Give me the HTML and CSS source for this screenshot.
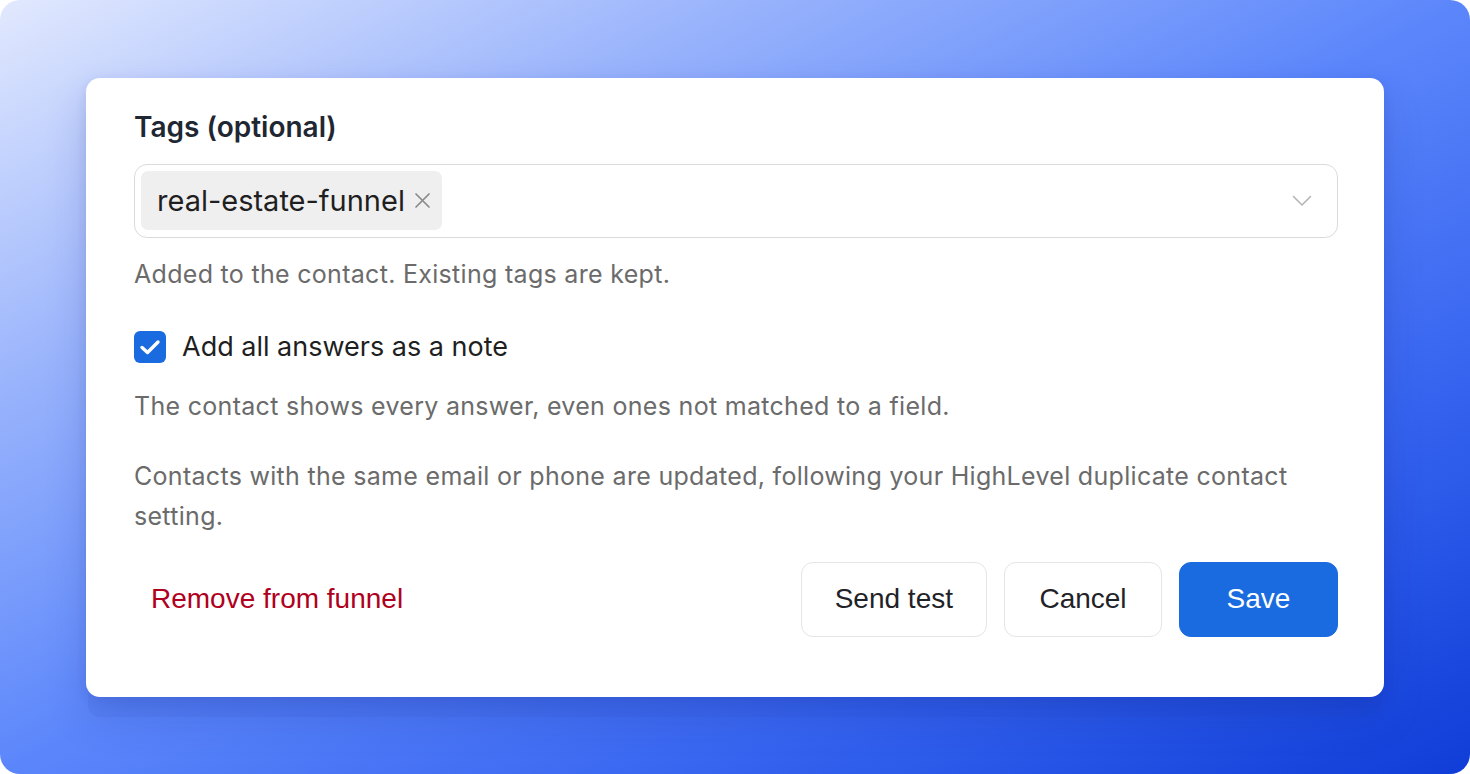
FILE: index.html
```html
<!DOCTYPE html>
<html lang="en">
<head>
<meta charset="utf-8">
<title>Tags</title>
<link rel="stylesheet" href="styles.css">
</head>
<body>
<div class="stage">
  <div class="card">
    <div class="label">Tags (optional)</div>
    <div class="select">
      <div class="chip">
        <span class="chip-text">real-estate-funnel</span>
        <svg class="chip-x" width="17" height="17" viewBox="0 0 17 17"><path d="M2 2 L15 15 M15 2 L2 15" stroke="#8a8a8a" stroke-width="1.7" fill="none" stroke-linecap="round"/></svg>
      </div>
      <svg class="chevron" width="20" height="12" viewBox="0 0 20 12"><path d="M1.5 1.5 L10 10 L18.5 1.5" stroke="#b5b5b5" stroke-width="1.6" fill="none" stroke-linecap="round" stroke-linejoin="round"/></svg>
    </div>
    <p class="help help-tags">Added to the contact. Existing tags are kept.</p>
    <label class="check-row">
      <span class="checkbox"><svg width="22" height="18" viewBox="0 0 22 18"><path d="M3 9.5 L8.5 14.5 L19 4" stroke="#fff" stroke-width="3.4" fill="none" stroke-linecap="round" stroke-linejoin="round"/></svg></span>
      <span class="check-text">Add all answers as a note</span>
    </label>
    <p class="help help-note">The contact shows every answer, even ones not matched to a field.</p>
    <p class="help para">Contacts with the same email or phone are updated, following your HighLevel duplicate contact setting.</p>
    <div class="footer">
      <button class="link-danger">Remove from funnel</button>
      <div class="actions">
        <button class="btn">Send test</button>
        <button class="btn">Cancel</button>
        <button class="btn btn-primary">Save</button>
      </div>
    </div>
  </div>
</div>
</body>
</html>
```
FILE: styles.css
```css
* { box-sizing: border-box; }
html, body { margin: 0; padding: 0; background: #ffffff; }
body { font-family: Inter, "Noto Sans", sans-serif; }
.stage {
  width: 1470px;
  height: 774px;
  border-radius: 20px;
  background: linear-gradient(to bottom right, #e2e9fe 0%, #9ab4fc 25%, #5b86fb 50%, #3563ef 75%, #0f3dd7 100%);
  display: flex;
  align-items: center;
  justify-content: center;
  overflow: hidden;
}
.card {
  width: 1298px;
  height: 619px;
  background: #fff;
  border-radius: 14px;
  padding: 34px 46px 0 48px;
  box-shadow: 0 22px 0 -2px rgba(30, 60, 170, 0.07), 0 20px 40px rgba(20, 40, 140, 0.18), 0 4px 12px rgba(20, 40, 140, 0.10);
}
.label {
  font-size: 28px;
  line-height: 30px;
  font-weight: 600;
  color: #1f2733;
}
.select {
  margin-top: 22px;
  height: 74px;
  border: 1.5px solid #dadada;
  border-radius: 13px;
  padding: 0 25px 0 6px;
  display: flex;
  align-items: center;
  justify-content: space-between;
}
.chip {
  height: 59px;
  background: #efefef;
  border-radius: 7px;
  padding: 0 11px 0 16px;
  display: flex;
  align-items: center;
  gap: 9px;
}
.chip-text {
  font-size: 29px;
  color: #1f1f1f;
}
.chip-x { display: block; }
.chevron { display: block; }
.help {
  margin: 0;
  font-size: 25px;
  letter-spacing: 0.3px;
  line-height: 30px;
  color: #6b6b6b;
}
.help-tags { margin-top: 21px; }
.check-row {
  margin-top: 42px;
  display: flex;
  align-items: center;
  gap: 16px;
  height: 32px;
}
.checkbox {
  width: 32px;
  height: 32px;
  border-radius: 6px;
  background: #1a6be0;
  display: flex;
  align-items: center;
  justify-content: center;
}
.checkbox svg { display: block; }
.check-text {
  font-size: 27px;
  color: #1f1f1f;
}
.help-note { margin-top: 28px; }
.para { margin-top: 35px; line-height: 40px; }
.footer {
  margin-top: 26px;
  display: flex;
  align-items: center;
  justify-content: space-between;
}
button {
  font-family: "Liberation Sans", Arial, sans-serif;
  font-size: 28px;
  cursor: pointer;
}
.link-danger {
  background: none;
  border: none;
  color: #b00020;
  padding: 0 17px;
  height: 75px;
}
.actions {
  display: flex;
  gap: 17px;
}
.btn {
  height: 75px;
  min-width: 158px;
  padding: 0 33px;
  border: 1.5px solid #e5e5e5;
  border-radius: 12px;
  background: #fff;
  color: #1f2328;
}
.btn-primary {
  background: #1a6be0;
  border-color: #1a6be0;
  color: #fff;
  min-width: 159px;
}
```
